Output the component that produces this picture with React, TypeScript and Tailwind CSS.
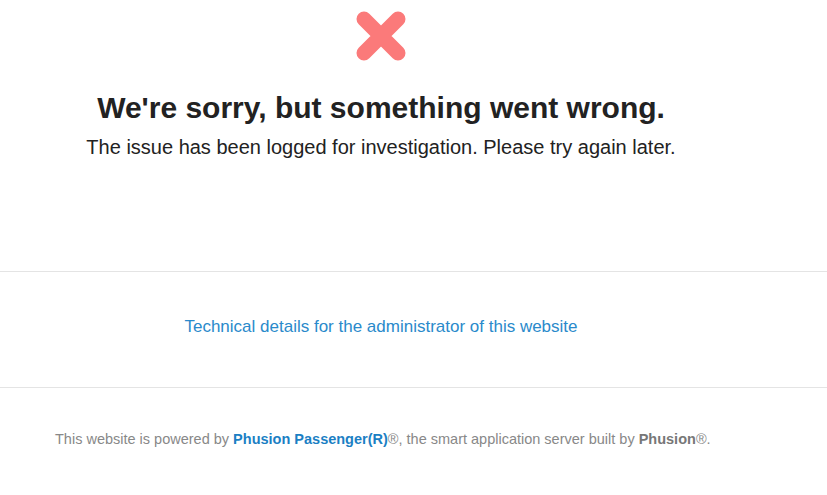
import React from "react";

export default function App() {
  return (
    <div className="min-h-[495px] bg-white" style={{ fontFamily: '"Liberation Sans", Arial, sans-serif' }}>
      <div className="ml-[55px] w-[652px] text-center">
        <div className="flex justify-center pt-[10px]">
          <svg width="52" height="52" viewBox="0 0 52 52">
            <path d="M9 9 L43 43 M43 9 L9 43" stroke="#fb7a7a" strokeWidth="15" strokeLinecap="round" />
          </svg>
        </div>
        <h1 className="mt-[29px] text-[30px] font-bold leading-[34px] text-[#222]">We're sorry, but something went wrong.</h1>
        <p className="mt-[10px] text-[20px] leading-[24px] text-[#222]">The issue has been logged for investigation. Please try again later.</p>
      </div>
      <div className="mt-[112px] border-t border-[#e4e4e4]" />
      <div className="ml-[55px] w-[652px] text-center pt-[43px] pb-[48px]">
        <a className="text-[17px] leading-[20px] text-[#2a8acb]">Technical details for the administrator of this website</a>
      </div>
      <div className="border-t border-[#e4e4e4]" />
      <div className="pl-[55px] pt-[43px] text-[14.5px] leading-[16px] text-[#888]">
        This website is powered by <b className="text-[#1b7fc4]">Phusion Passenger(R)</b>®, the smart application server built by <b className="text-[#777]">Phusion</b>®.
      </div>
    </div>
  );
}
